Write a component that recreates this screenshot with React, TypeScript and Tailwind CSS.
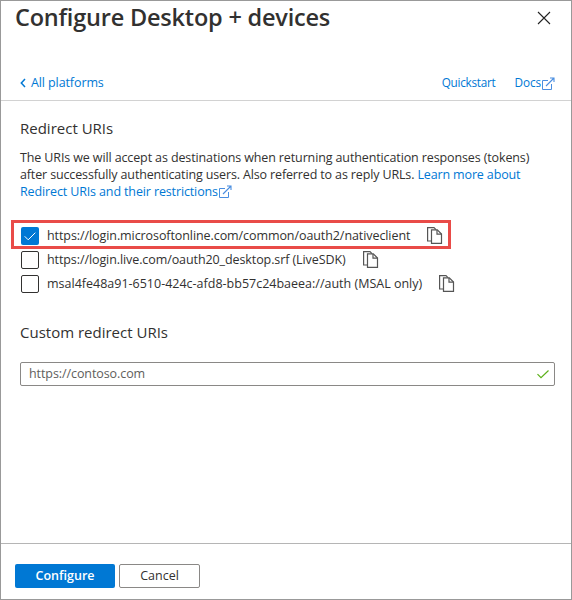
import React from "react";

function ExternalIcon() {
  return (
    <svg width="14" height="13" viewBox="0 0 14 13" fill="none" stroke="#4a8ee0" strokeWidth="1" className="shrink-0">
      <path d="M7 3.5H1.5V12.5H10.5V7" />
      <path d="M5 9L13 1M9 1H13V5" strokeWidth="1.1" />
    </svg>
  );
}

function CopyIcon() {
  return (
    <svg width="16" height="18" viewBox="0 0 16 18" fill="none" stroke="#555" strokeWidth="1.2" className="block shrink-0">
      <path d="M4.5 14H0.6V0.6H7L9 2.6" />
      <path d="M4.5 2.8H10.3L14.5 7V16.4H4.5Z" />
      <path d="M10 3V7.2H14.5" />
    </svg>
  );
}

interface UriRowProps {
  uri: string;
  checked?: boolean;
  textClass: string;
  highlighted?: boolean;
}

function UriRow({ uri, checked, textClass, highlighted }: UriRowProps) {
  return (
    <div className="relative flex h-6 items-center">
      {highlighted && <div className="absolute -top-1 -left-[9px] h-[29px] w-[440px] border-3 border-[#e94b48]" />}
      <span
        className={
          checked
            ? "ml-px flex size-[18px] shrink-0 items-center justify-center rounded-[2px] bg-[#0078d4]"
            : "ml-px flex size-[18px] shrink-0 rounded-[2px] border border-[#323130]"
        }
      >
        {checked && (
          <svg width="12" height="9" viewBox="0 0 12 9" fill="none" stroke="white" strokeWidth="1">
            <path d="M0.7 4.3L4.2 7.8L11.3 0.7" />
          </svg>
        )}
      </span>
      <span className={`ml-2 shrink-0 whitespace-nowrap ${textClass}`}>{uri}</span>
      <CopyIcon />
    </div>
  );
}

export default function App() {
  return (
    <div className="flex h-[600px] w-[572px] flex-col overflow-hidden border border-[#999] bg-white font-['Open_Sans',sans-serif] text-[12.5px] text-[#323130]">
      <header className="h-[100px] shrink-0 border-b border-[#d2d2d2]">
        <div className="flex h-[34px] items-center justify-between pr-5 pl-3.5">
          <h1 className="-mt-0.5 text-[23.5px] leading-[34px] font-semibold tracking-[-0.2px] whitespace-nowrap">
            Configure Desktop + devices
          </h1>
          <svg width="14" height="14" viewBox="0 0 14 14" fill="none" stroke="#222" strokeWidth="1.1">
            <path d="M1 1L13 13M13 1L1 13" />
          </svg>
        </div>
        <div className="mt-[38px] flex h-5 items-center pr-4 pl-[19px] text-[#0078d4]">
          <svg width="6" height="10" viewBox="0 0 6 10" fill="none" stroke="#0078d4" strokeWidth="1.5" className="mr-[5px]">
            <path d="M5 1L1.3 5L5 9" />
          </svg>
          <a className="tracking-[-0.1px] whitespace-nowrap">All platforms</a>
          <a className="ml-auto -mt-px text-[11.75px] tracking-[-0.25px] whitespace-nowrap">Quickstart</a>
          <a className="ml-[19px] flex items-center text-[11.75px] tracking-[-0.1px]">
            <span className="-mt-px">Docs</span>
            <ExternalIcon />
          </a>
        </div>
      </header>
      <main className="flex-1 px-[19px] pt-[17px]">
        <h2 className="text-[15px] leading-5">Redirect URIs</h2>
        <div className="mt-[11px] leading-[17px] whitespace-nowrap">
          <div className="tracking-[-0.12px]">The URIs we will accept as destinations when returning authentication responses (tokens)</div>
          <div className="tracking-[-0.14px]">
            after successfully authenticating users. Also referred to as reply URLs.{" "}
            <a className="text-[#0078d4]">Learn more about</a>
          </div>
          <div className="flex items-center text-[#0078d4]">
            <a className="tracking-[-0.13px]">Redirect URIs and their restrictions</a>
            <ExternalIcon />
          </div>
        </div>
        <div className="mt-[24px]">
          <UriRow
            checked
            highlighted
            textClass="w-[380px] tracking-[-0.08px]"
            uri="https://login.microsoftonline.com/common/oauth2/nativeclient"
          />
          <UriRow textClass="w-[316px] tracking-[-0.09px]" uri="https://login.live.com/oauth20_desktop.srf (LiveSDK)" />
          <UriRow textClass="w-[392px]" uri="msal4fe48a91-6510-424c-afd8-bb57c24baeea://auth (MSAL only)" />
        </div>
        <h2 className="mt-[26px] text-[15px] leading-5">Custom redirect URIs</h2>
        <div className="mt-5 flex h-6 w-[535px] items-center justify-between rounded-[2px] border border-[#8a8886] pr-[5px] pl-2 text-[#605e5c]">
          <span className="tracking-[-0.08px]">https://contoso.com</span>
          <svg width="12" height="9" viewBox="0 0 12 9" fill="none" stroke="#5cb019" strokeWidth="1.2">
            <path d="M0.5 4.2L4 7.7L11.5 0.5" />
          </svg>
        </div>
      </main>
      <footer className="flex h-14 shrink-0 gap-1 border-t border-[#b5b5b5] pt-5 pl-3.5">
        <button className="h-6 w-[100px] rounded-[2px] bg-[#0078d4] font-semibold text-white">Configure</button>
        <button className="h-6 w-[81px] rounded-[2px] border border-[#8a8886]">Cancel</button>
      </footer>
    </div>
  );
}
